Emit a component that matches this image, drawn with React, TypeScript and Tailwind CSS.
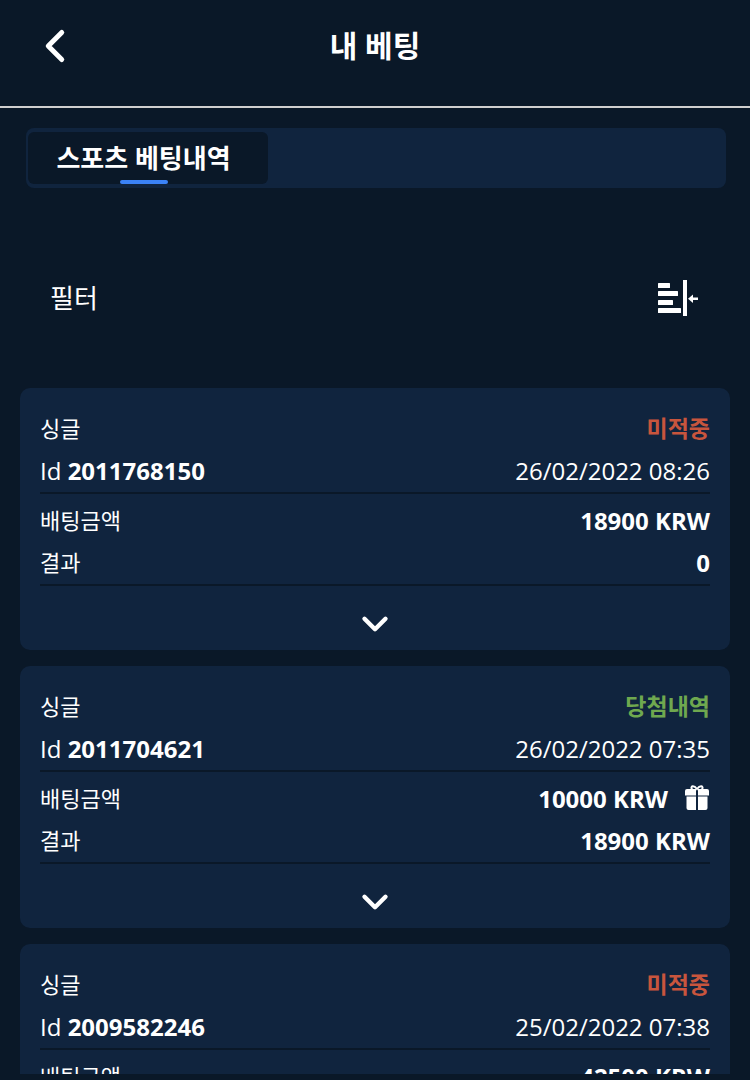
import { ChevronLeft, ChevronDown } from 'lucide-react';

type Bet = {
  status: string;
  statusClass: string;
  id: string;
  date: string;
  amount: string;
  result: string;
  gift?: boolean;
};

const bets: Bet[] = [
  { status: '미적중', statusClass: 'text-[#c8553d]', id: '2011768150', date: '26/02/2022 08:26', amount: '18900 KRW', result: '0' },
  { status: '당첨내역', statusClass: 'text-[#6fa84f]', id: '2011704621', date: '26/02/2022 07:35', amount: '10000 KRW', result: '18900 KRW', gift: true },
  { status: '미적중', statusClass: 'text-[#c8553d]', id: '2009582246', date: '25/02/2022 07:38', amount: '42500 KRW', result: '0' },
];

function GiftIcon() {
  return (
    <svg width="26" height="26" viewBox="0 0 26 26" fill="none" className="ml-[16px] -mt-[2px]">
      <path d="M8 4.5 C6 0.5 10 0 13 4 C16 0 20 0.5 18 4.5" stroke="white" strokeWidth="2" />
      <path d="M1 6a2 2 0 0 1 2-2H12V10.5H1Z" fill="white" />
      <path d="M14 4H23a2 2 0 0 1 2 2V10.5H14Z" fill="white" />
      <path d="M2.5 11.5H12V25H4.5a2 2 0 0 1-2-2Z" fill="white" />
      <path d="M14 11.5H23.5V23a2 2 0 0 1-2 2H14Z" fill="white" />
    </svg>
  );
}

function FilterIcon() {
  return (
    <svg width="40" height="36" viewBox="0 0 40 36" fill="white">
      <rect x="0" y="3" width="12" height="5" rx="0.5" />
      <rect x="0" y="11" width="20" height="5" rx="0.5" />
      <rect x="0" y="20" width="15" height="5" rx="0.5" />
      <rect x="0" y="28" width="23" height="5" rx="0.5" />
      <rect x="25" y="0" width="4" height="36" />
      <rect x="33" y="17.5" width="7" height="2.5" />
      <path d="M30 18.75 L35 14.5 V23 Z" />
    </svg>
  );
}

function BetCard({ bet }: { bet: Bet }) {
  return (
    <div className="bg-[#10243e] rounded-[10px] px-[20px] pt-[20px] h-[262px] shrink-0">
      <div className="flex justify-between items-center h-[42px] text-[22px] pb-[2px]">
        <span>싱글</span>
        <span className={`font-bold text-[23px] ${bet.statusClass}`}>{bet.status}</span>
      </div>
      <div className="flex justify-between items-center h-[42px] text-[24px] border-b-2 border-[#0a1828] box-content">
        <span>
          Id <span className="font-bold">{bet.id}</span>
        </span>
        <span>{bet.date}</span>
      </div>
      <div className="flex justify-between items-center h-[42px] text-[22px] mt-[6px] pb-[2px]">
        <span>배팅금액</span>
        <span className="flex items-center font-bold text-[24px] mt-[2px]">
          {bet.amount}
          {bet.gift && <GiftIcon />}
        </span>
      </div>
      <div className="flex justify-between items-center h-[40px] text-[22px] border-b-2 border-[#0a1828] box-content pb-[2px]">
        <span>결과</span>
        <span className="font-bold text-[24px] mt-[2px]">{bet.result}</span>
      </div>
      <div className="flex justify-center mt-[17px]">
        <ChevronDown size={42} strokeWidth={2.5} className="text-white" />
      </div>
    </div>
  );
}

export default function App() {
  return (
    <div
      className="w-[750px] h-[1080px] overflow-hidden bg-[#0a1828] text-white"
      style={{ fontFamily: '"Open Sans", "Noto Sans CJK KR", sans-serif' }}
    >
      <div className="h-[1074px] overflow-hidden">
        {/* Header */}
        <div className="h-[108px] border-b-2 border-[#cfcfcf] relative flex items-center justify-center pb-[14px]">
          <ChevronLeft size={54} strokeWidth={2.2} className="absolute left-[28px] top-[19px] text-white" />
          <h1 className="text-[30px] font-bold leading-none">내 베팅</h1>
        </div>

        {/* Tabs */}
        <div className="mt-[20px] ml-[26px] w-[700px] h-[60px] bg-[#10243e] rounded-[8px] pl-[2px] pt-[4px] pb-[4px] flex">
          <div className="w-[240px] bg-[#0a1828] rounded-[6px] relative flex justify-center pt-[7px] pr-[9px]">
            <span className="text-[26px] font-bold leading-[38px]">스포츠 베팅내역</span>
            <div className="absolute bottom-0 left-[92px] w-[48px] h-[4px] rounded-[2px] bg-[#3b82f6]" />
          </div>
        </div>

        {/* Filter */}
        <div className="h-[200px] pl-[50px] pr-[52px] pt-[20px] flex items-center justify-between">
          <span className="text-[26px]">필터</span>
          <FilterIcon />
        </div>

        {/* Bets */}
        <div className="mx-[20px] flex flex-col gap-[16px]">
          {bets.map(b => (
            <BetCard key={b.id} bet={b} />
          ))}
        </div>
      </div>
    </div>
  );
}
